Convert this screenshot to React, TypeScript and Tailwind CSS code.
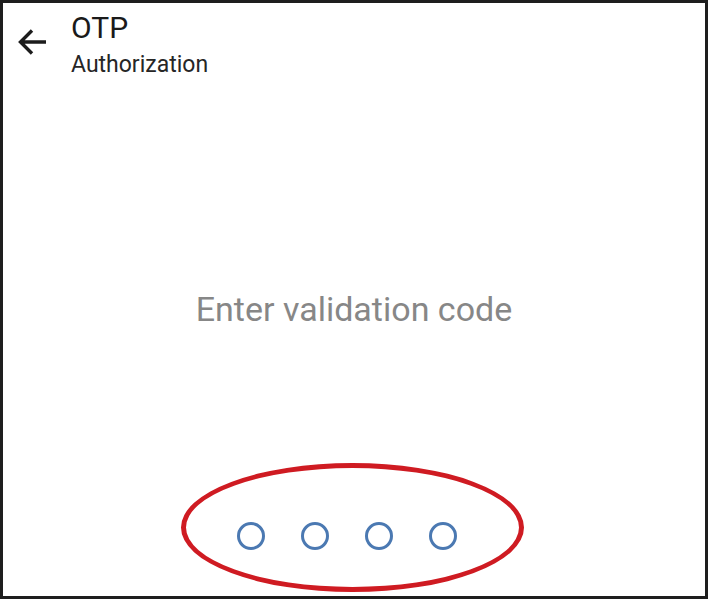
import React from "react";

// four empty pin slots
const slots = [0, 1, 2, 3];

const BackArrow: React.FC = () => (
  <svg width="30" height="28" viewBox="0 0 30 28" fill="none" className="shrink-0">
    <path d="M29 14H3.5M15 2.5L3.5 14L15 25.5" stroke="#1c1c1c" strokeWidth="3.4" />
  </svg>
);

const App: React.FC = () => {
  return (
    <div className="relative w-[708px] h-[599px] bg-white border-[3px] border-[#1e1e1e] flex flex-col font-['Roboto','Liberation_Sans',sans-serif]">
      <div className="flex items-start">
        <div className="ml-[14px] mt-[25px]">
          <BackArrow />
        </div>
        <div className="ml-[24px] mt-[10px] flex flex-col">
          <span className="text-[30px] leading-none text-[#1a1a1a]">OTP</span>
          <span className="mt-[10px] text-[23px] leading-none text-[#262626]">Authorization</span>
        </div>
      </div>

      <p className="mt-[216px] text-center text-[34px] leading-none text-[#878787]">
        Enter validation code
      </p>

      <div className="mt-[196px] flex justify-center gap-[36px] pr-[14px]">
        {slots.map((i) => (
          <div key={i} className="w-[28px] h-[28px] rounded-full border-[3px] border-[#4b79b2]" />
        ))}
      </div>

      {/* red annotation ring */}
      <div className="absolute left-[178px] top-[460px] w-[343px] h-[129px] rounded-[50%] border-[5px] border-[#cf1b22]" />
    </div>
  );
};

export default App;
